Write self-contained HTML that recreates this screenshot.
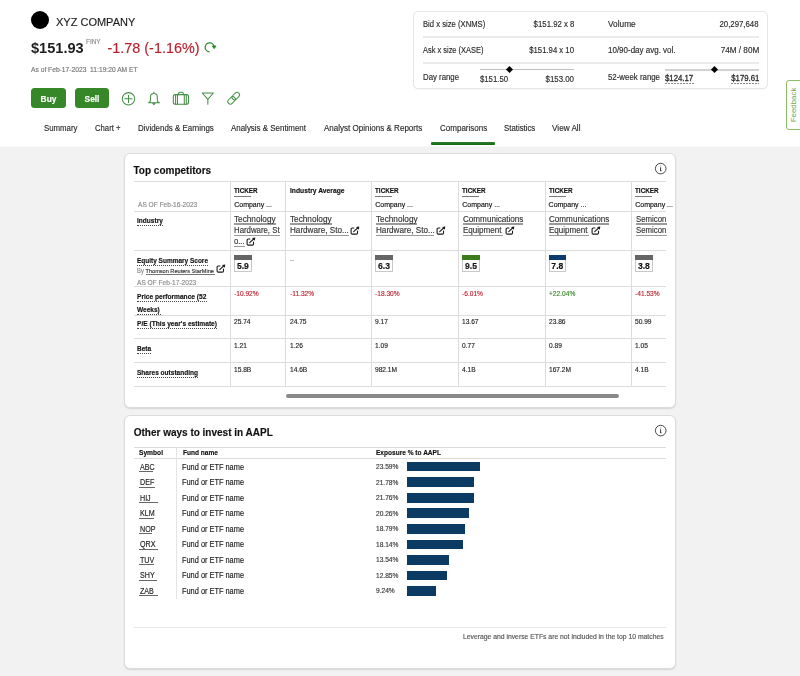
<!DOCTYPE html>
<html><head><meta charset="utf-8"><title>XYZ Company - Comparisons</title>
<style>
html,body{margin:0;padding:0;overflow:hidden;}
body{width:800px;height:676px;position:relative;overflow:hidden;background:#fff;font-family:'Liberation Sans', sans-serif;}
.t{position:absolute;white-space:nowrap;-webkit-text-stroke:0.15px currentColor;}
</style></head><body>
<div style="position:absolute;left:0px;top:146px;width:800px;height:530px;background:#f2f2f2"></div>
<div style="position:absolute;left:0px;top:145.5px;width:800px;height:1.5px;background:linear-gradient(#fff,#f2f2f2)"></div>
<div style="position:absolute;left:31px;top:10.5px;width:18px;height:18px;background:#000;border-radius:50%"></div>
<svg style="position:absolute;left:198px;top:38px" width="24" height="20" viewBox="198 38 24 20"><path d="M209.6 51.9A4.5 4.5 0 1 1 214.1 46.6" fill="none" stroke="#2a8a2a" stroke-width="1.25"/><path d="M212.2 45.9L216.1 45.9L214.2 48.8Z" fill="#1f7f1f" stroke="#1f7f1f" stroke-width="0.6" stroke-linejoin="round"/></svg>
<div style="position:absolute;left:31px;top:88px;width:35px;height:20px;background:#368727;border-radius:3.5px"></div>
<div style="position:absolute;left:75px;top:88px;width:34px;height:20px;background:#368727;border-radius:3.5px"></div>
<svg style="position:absolute;left:118px;top:88px" width="126" height="20" viewBox="118 88 126 20">
<g fill="none" stroke="#468f46" stroke-width="1.05" stroke-linecap="round" stroke-linejoin="round">
<circle cx="128.5" cy="98.8" r="6.2"/><path d="M128.5 95.2v7.2M124.9 98.8h7.2"/>
<path d="M148.3 102.7h11.3M149.2 102.7c0.9-0.8 1.3-1.6 1.3-3.2v-2.6a3.4 3.4 0 0 1 6.8 0v2.6c0 1.6 0.4 2.4 1.3 3.2M153.9 92v1.4M152.6 103.2l1.3 1.5l1.3-1.5"/>
<rect x="173.3" y="94.6" width="15.2" height="9.6" rx="2"/><path d="M178.6 94.6v-1.4a1 1 0 0 1 1-1h2.6a1 1 0 0 1 1 1v1.4M175.6 94.6v9.6M177.5 94.6v9.6M184.3 94.6v9.6M186.3 94.6v9.6"/>
<path d="M202.3 93h11.1l-5.55 6.3z M207.85 99.3v5"/>
<g transform="translate(233.7 98.2) scale(0.9) translate(-233.6 -98.5) rotate(-45 233.6 98.5)"><rect x="225.6" y="95.7" width="9.4" height="5.6" rx="2.8"/><rect x="232.2" y="95.7" width="9.4" height="5.6" rx="2.8"/></g>
</g></svg>
<div style="position:absolute;left:431.3px;top:142px;width:63.6px;height:3.2px;background:linear-gradient(#2f7d2f,#146914);border-radius:1px"></div>
<div style="position:absolute;left:413.25px;top:10.5px;width:355px;height:78.5px;box-sizing:border-box;border:1.3px solid #e6e6e6;border-radius:5px;background:#fff;box-shadow:0 1px 1px rgba(0,0,0,0.03)"></div>
<div style="position:absolute;left:422.5px;top:36.2px;width:336.5px;height:1.4px;background:#ebebeb"></div>
<div style="position:absolute;left:422.5px;top:62.3px;width:336.5px;height:1.4px;background:#ebebeb"></div>
<div style="position:absolute;left:479.5px;top:69px;width:94.5px;height:1.2px;background:#c2c2c2"></div>
<div style="position:absolute;left:665px;top:68.7px;width:94px;height:2px;background:#d2d2d2"></div>
<div style="position:absolute;left:507.1px;top:67.1px;width:5px;height:5px;background:#000;transform:rotate(45deg)"></div>
<div style="position:absolute;left:712.0px;top:67.1px;width:5px;height:5px;background:#000;transform:rotate(45deg)"></div>
<div style="position:absolute;left:665px;top:83px;width:28.5px;height:1px;background:repeating-linear-gradient(90deg,#8a8a8a 0 2px,transparent 2px 3px)"></div>
<div style="position:absolute;left:730.5px;top:83px;width:28.5px;height:1px;background:repeating-linear-gradient(90deg,#8a8a8a 0 2px,transparent 2px 3px)"></div>
<div style="position:absolute;left:786px;top:80px;width:20px;height:50px;box-sizing:border-box;border:1px solid #8cbd6c;border-radius:3px;background:#fff"></div>
<div style="position:absolute;left:794px;top:105px;width:0;height:0"><div style="position:absolute;left:0;top:0;transform:translate(-50%,-50%) rotate(-90deg);font-size:7.9px;color:#6fa84a;white-space:nowrap;line-height:8px">Feedback</div></div>
<div style="position:absolute;left:123.8px;top:153px;width:551.8px;height:255px;box-sizing:border-box;border:1px solid #dcdcdc;border-radius:6px;background:#fff;box-shadow:0 1px 1.5px rgba(0,0,0,0.12)"></div>
<svg style="position:absolute;left:654px;top:162px" width="14" height="14" viewBox="0 0 14 14"><circle cx="6.7" cy="6.6" r="5.3" fill="none" stroke="#333" stroke-width="0.9"/><path d="M6.7 3.7v0.6M6.6 5.3v3.3M6.0 8.7h1.5" stroke="#333" stroke-width="1" fill="none"/></svg>
<div style="position:absolute;left:133.5px;top:180.8px;width:532.5px;height:1px;background:#dcdcdc"></div>
<div style="position:absolute;left:133.5px;top:211.0px;width:532.5px;height:1px;background:#dcdcdc"></div>
<div style="position:absolute;left:133.5px;top:250.0px;width:532.5px;height:1px;background:#dcdcdc"></div>
<div style="position:absolute;left:133.5px;top:286.3px;width:532.5px;height:1px;background:#dcdcdc"></div>
<div style="position:absolute;left:133.5px;top:314.5px;width:532.5px;height:1px;background:#dcdcdc"></div>
<div style="position:absolute;left:133.5px;top:338.1px;width:532.5px;height:1px;background:#dcdcdc"></div>
<div style="position:absolute;left:133.5px;top:362.1px;width:532.5px;height:1px;background:#dcdcdc"></div>
<div style="position:absolute;left:133.5px;top:385.9px;width:532.5px;height:1px;background:#dcdcdc"></div>
<div style="position:absolute;left:230.0px;top:181.3px;width:1px;height:205.09999999999997px;background:#dcdcdc"></div>
<div style="position:absolute;left:284.5px;top:181.3px;width:1px;height:205.09999999999997px;background:#dcdcdc"></div>
<div style="position:absolute;left:371.25px;top:181.3px;width:1px;height:205.09999999999997px;background:#dcdcdc"></div>
<div style="position:absolute;left:458.25px;top:181.3px;width:1px;height:205.09999999999997px;background:#dcdcdc"></div>
<div style="position:absolute;left:544.5px;top:181.3px;width:1px;height:205.09999999999997px;background:#dcdcdc"></div>
<div style="position:absolute;left:631.1px;top:181.3px;width:1px;height:205.09999999999997px;background:#dcdcdc"></div>
<div style="position:absolute;left:234.2px;top:195.6px;width:17px;height:1px;background:#7a7a7a"></div>
<div style="position:absolute;left:375.2px;top:195.6px;width:17px;height:1px;background:#7a7a7a"></div>
<div style="position:absolute;left:462.3px;top:195.6px;width:17px;height:1px;background:#7a7a7a"></div>
<div style="position:absolute;left:548.6px;top:195.6px;width:17px;height:1px;background:#7a7a7a"></div>
<div style="position:absolute;left:635.2px;top:195.6px;width:17px;height:1px;background:#7a7a7a"></div>
<div style="position:absolute;left:137px;top:225px;width:26px;height:0px;border-top:1px dotted #4a4a4a"></div>
<div style="position:absolute;left:234.4px;top:223.4px;width:41.6px;height:1.5px;background:#9a9a9a"></div>
<div style="position:absolute;left:234.4px;top:234.70000000000002px;width:45.6px;height:1.5px;background:#9a9a9a"></div>
<div style="position:absolute;left:234.4px;top:245.8px;width:10.5px;height:1.5px;background:#9a9a9a"></div>
<svg style="position:absolute;left:246.40px;top:236.50px" width="11" height="11" viewBox="0 0 11 11"><path d="M3.9 2.0H2.2a1.1 1.1 0 0 0-1.1 1.1V7.0a1.1 1.1 0 0 0 1.1 1.1H6.4a1.1 1.1 0 0 0 1.1-1.1V5.0M3.7 5.6L8.2 1.5" fill="none" stroke="#1a1a1a" stroke-width="1.1" stroke-linecap="round"/><path d="M9.3 0.5L6.0 1.0L8.8 3.8Z" fill="#1a1a1a"/></svg>
<div style="position:absolute;left:290px;top:223.4px;width:41.6px;height:1.5px;background:#9a9a9a"></div>
<div style="position:absolute;left:290px;top:234.70000000000002px;width:58.75px;height:1.5px;background:#9a9a9a"></div>
<svg style="position:absolute;left:350.20px;top:225.90px" width="11" height="11" viewBox="0 0 11 11"><path d="M3.9 2.0H2.2a1.1 1.1 0 0 0-1.1 1.1V7.0a1.1 1.1 0 0 0 1.1 1.1H6.4a1.1 1.1 0 0 0 1.1-1.1V5.0M3.7 5.6L8.2 1.5" fill="none" stroke="#1a1a1a" stroke-width="1.1" stroke-linecap="round"/><path d="M9.3 0.5L6.0 1.0L8.8 3.8Z" fill="#1a1a1a"/></svg>
<div style="position:absolute;left:375.5px;top:223.4px;width:41.6px;height:1.5px;background:#9a9a9a"></div>
<div style="position:absolute;left:375.5px;top:234.70000000000002px;width:58.75px;height:1.5px;background:#9a9a9a"></div>
<svg style="position:absolute;left:435.70px;top:225.90px" width="11" height="11" viewBox="0 0 11 11"><path d="M3.9 2.0H2.2a1.1 1.1 0 0 0-1.1 1.1V7.0a1.1 1.1 0 0 0 1.1 1.1H6.4a1.1 1.1 0 0 0 1.1-1.1V5.0M3.7 5.6L8.2 1.5" fill="none" stroke="#1a1a1a" stroke-width="1.1" stroke-linecap="round"/><path d="M9.3 0.5L6.0 1.0L8.8 3.8Z" fill="#1a1a1a"/></svg>
<div style="position:absolute;left:462.5px;top:223.4px;width:60.4px;height:1.5px;background:#9a9a9a"></div>
<div style="position:absolute;left:462.5px;top:234.70000000000002px;width:40px;height:1.5px;background:#9a9a9a"></div>
<svg style="position:absolute;left:504.50px;top:225.90px" width="11" height="11" viewBox="0 0 11 11"><path d="M3.9 2.0H2.2a1.1 1.1 0 0 0-1.1 1.1V7.0a1.1 1.1 0 0 0 1.1 1.1H6.4a1.1 1.1 0 0 0 1.1-1.1V5.0M3.7 5.6L8.2 1.5" fill="none" stroke="#1a1a1a" stroke-width="1.1" stroke-linecap="round"/><path d="M9.3 0.5L6.0 1.0L8.8 3.8Z" fill="#1a1a1a"/></svg>
<div style="position:absolute;left:549px;top:223.4px;width:60.4px;height:1.5px;background:#9a9a9a"></div>
<div style="position:absolute;left:549px;top:234.70000000000002px;width:40px;height:1.5px;background:#9a9a9a"></div>
<svg style="position:absolute;left:590.90px;top:225.90px" width="11" height="11" viewBox="0 0 11 11"><path d="M3.9 2.0H2.2a1.1 1.1 0 0 0-1.1 1.1V7.0a1.1 1.1 0 0 0 1.1 1.1H6.4a1.1 1.1 0 0 0 1.1-1.1V5.0M3.7 5.6L8.2 1.5" fill="none" stroke="#1a1a1a" stroke-width="1.1" stroke-linecap="round"/><path d="M9.3 0.5L6.0 1.0L8.8 3.8Z" fill="#1a1a1a"/></svg>
<div style="position:absolute;left:635.5px;top:223.4px;width:31px;height:1.5px;background:#9a9a9a"></div>
<div style="position:absolute;left:635.5px;top:234.70000000000002px;width:31px;height:1.5px;background:#9a9a9a"></div>
<div style="position:absolute;left:137px;top:264.6px;width:71px;height:0px;border-top:1px dotted #4a4a4a"></div>
<div style="position:absolute;left:145.5px;top:274px;width:69.5px;height:0.9px;background:#777"></div>
<svg style="position:absolute;left:216.20px;top:264.20px" width="11" height="11" viewBox="0 0 11 11"><path d="M3.9 2.0H2.2a1.1 1.1 0 0 0-1.1 1.1V7.0a1.1 1.1 0 0 0 1.1 1.1H6.4a1.1 1.1 0 0 0 1.1-1.1V5.0M3.7 5.6L8.2 1.5" fill="none" stroke="#1a1a1a" stroke-width="1.1" stroke-linecap="round"/><path d="M9.3 0.5L6.0 1.0L8.8 3.8Z" fill="#1a1a1a"/></svg>
<div style="position:absolute;left:234.2px;top:255.2px;width:17.5px;height:17.2px;box-sizing:border-box;border:1px solid #c8c8c8;background:#fff"></div>
<div style="position:absolute;left:234.2px;top:255.2px;width:17.5px;height:4.8px;background:#666"></div>
<div style="position:absolute;left:375.3px;top:255.2px;width:17.5px;height:17.2px;box-sizing:border-box;border:1px solid #c8c8c8;background:#fff"></div>
<div style="position:absolute;left:375.3px;top:255.2px;width:17.5px;height:4.8px;background:#666"></div>
<div style="position:absolute;left:462.3px;top:255.2px;width:17.5px;height:17.2px;box-sizing:border-box;border:1px solid #c8c8c8;background:#fff"></div>
<div style="position:absolute;left:462.3px;top:255.2px;width:17.5px;height:4.8px;background:#3a7d1a"></div>
<div style="position:absolute;left:548.6px;top:255.2px;width:17.5px;height:17.2px;box-sizing:border-box;border:1px solid #c8c8c8;background:#fff"></div>
<div style="position:absolute;left:548.6px;top:255.2px;width:17.5px;height:4.8px;background:#0b3c6e"></div>
<div style="position:absolute;left:635.2px;top:255.2px;width:17.5px;height:17.2px;box-sizing:border-box;border:1px solid #c8c8c8;background:#fff"></div>
<div style="position:absolute;left:635.2px;top:255.2px;width:17.5px;height:4.8px;background:#666"></div>
<div style="position:absolute;left:137px;top:301px;width:69.5px;height:0px;border-top:1px dotted #4a4a4a"></div>
<div style="position:absolute;left:137px;top:314px;width:24px;height:0px;border-top:1px dotted #4a4a4a"></div>
<div style="position:absolute;left:137px;top:328.4px;width:80px;height:0px;border-top:1px dotted #4a4a4a"></div>
<div style="position:absolute;left:137px;top:353px;width:14px;height:0px;border-top:1px dotted #4a4a4a"></div>
<div style="position:absolute;left:137px;top:377px;width:61px;height:0px;border-top:1px dotted #4a4a4a"></div>
<div style="position:absolute;left:286.3px;top:393.7px;width:333px;height:3.9px;background:#8a8a8a;border-radius:2px"></div>
<div style="position:absolute;left:123.8px;top:415.1px;width:551.8px;height:254.2px;box-sizing:border-box;border:1px solid #dcdcdc;border-radius:6px;background:#fff;box-shadow:0 1px 1.5px rgba(0,0,0,0.12)"></div>
<svg style="position:absolute;left:654px;top:423.5px" width="14" height="14" viewBox="0 0 14 14"><circle cx="6.7" cy="6.6" r="5.3" fill="none" stroke="#333" stroke-width="0.9"/><path d="M6.7 3.7v0.6M6.6 5.3v3.3M6.0 8.7h1.5" stroke="#333" stroke-width="1" fill="none"/></svg>
<div style="position:absolute;left:133.5px;top:446.8px;width:532.5px;height:1px;background:#dcdcdc"></div>
<div style="position:absolute;left:133.5px;top:457.9px;width:532.5px;height:1px;background:#dcdcdc"></div>
<div style="position:absolute;left:176px;top:447px;width:1px;height:151.5px;background:#e4e4e4"></div>
<div style="position:absolute;left:139px;top:471.1px;width:14.2px;height:0.9px;background:#666"></div>
<div style="position:absolute;left:407.3px;top:461.90000000000003px;width:72.30335px;height:9.6px;background:#0b3a63"></div>
<div style="position:absolute;left:139px;top:486.62px;width:15.7px;height:0.9px;background:#666"></div>
<div style="position:absolute;left:407.3px;top:477.42px;width:66.7557px;height:9.6px;background:#0b3a63"></div>
<div style="position:absolute;left:139px;top:502.14000000000004px;width:18.7px;height:0.9px;background:#666"></div>
<div style="position:absolute;left:407.3px;top:492.94000000000005px;width:66.6944px;height:9.6px;background:#0b3a63"></div>
<div style="position:absolute;left:139px;top:517.6600000000001px;width:14.9px;height:0.9px;background:#666"></div>
<div style="position:absolute;left:407.3px;top:508.4600000000001px;width:62.096900000000005px;height:9.6px;background:#0b3a63"></div>
<div style="position:absolute;left:139px;top:533.1800000000001px;width:13.3px;height:0.9px;background:#666"></div>
<div style="position:absolute;left:407.3px;top:523.98px;width:57.59135px;height:9.6px;background:#0b3a63"></div>
<div style="position:absolute;left:139px;top:548.7px;width:19.2px;height:0.9px;background:#666"></div>
<div style="position:absolute;left:407.3px;top:539.5px;width:55.5991px;height:9.6px;background:#0b3a63"></div>
<div style="position:absolute;left:139px;top:564.22px;width:15px;height:0.9px;background:#666"></div>
<div style="position:absolute;left:407.3px;top:555.02px;width:41.500099999999996px;height:9.6px;background:#0b3a63"></div>
<div style="position:absolute;left:139px;top:579.74px;width:18px;height:0.9px;background:#666"></div>
<div style="position:absolute;left:407.3px;top:570.54px;width:39.38525px;height:9.6px;background:#0b3a63"></div>
<div style="position:absolute;left:139px;top:595.26px;width:18.7px;height:0.9px;background:#666"></div>
<div style="position:absolute;left:407.3px;top:586.06px;width:28.3206px;height:9.6px;background:#0b3a63"></div>
<div style="position:absolute;left:133.5px;top:627px;width:532.5px;height:1px;#e6e6e6;background:#e6e6e6"></div>
<div style="position:absolute;left:0;top:0;width:800px;height:676px;will-change:transform">
<div class="t" style="left:56px;top:14px;font-size:11px;line-height:17px;font-weight:400;color:#1f1f1f;">XYZ COMPANY</div>
<div class="t" style="left:31px;top:37px;font-size:14.2px;line-height:22px;font-weight:700;color:#1f1f1f;-webkit-text-stroke:0px;transform:scaleX(1.0283);transform-origin:0 0">$151.93</div>
<div class="t" style="left:86px;top:37px;font-size:6.4px;line-height:10px;font-weight:400;color:#8a8a8a;">FINY</div>
<div class="t" style="left:107.5px;top:37px;font-size:14.4px;line-height:22px;font-weight:400;color:#bb1f2c;">-1.78 (-1.16%)</div>
<div class="t" style="left:31px;top:64px;font-size:6.7px;line-height:11px;font-weight:400;color:#777;">As of Feb-17-2023&nbsp;&nbsp;11:19:20 AM ET</div>
<div class="t" style="left:-51.5px;width:200px;text-align:center;top:93px;font-size:8.4px;line-height:13px;font-weight:700;color:#fff;">Buy</div>
<div class="t" style="left:-8px;width:200px;text-align:center;top:93px;font-size:8.4px;line-height:13px;font-weight:700;color:#fff;">Sell</div>
<div class="t" style="left:43.75px;top:121px;font-size:8.7px;line-height:14px;font-weight:400;color:#2a2a2a;;transform:scaleX(0.9012);transform-origin:0 0">Summary</div>
<div class="t" style="left:94.75px;top:121px;font-size:8.7px;line-height:14px;font-weight:400;color:#2a2a2a;;transform:scaleX(0.8874);transform-origin:0 0">Chart +</div>
<div class="t" style="left:138px;top:121px;font-size:8.7px;line-height:14px;font-weight:400;color:#2a2a2a;;transform:scaleX(0.9120);transform-origin:0 0">Dividends &amp; Earnings</div>
<div class="t" style="left:231.25px;top:121px;font-size:8.7px;line-height:14px;font-weight:400;color:#2a2a2a;;transform:scaleX(0.9136);transform-origin:0 0">Analysis &amp; Sentiment</div>
<div class="t" style="left:323.75px;top:121px;font-size:8.7px;line-height:14px;font-weight:400;color:#2a2a2a;;transform:scaleX(0.9248);transform-origin:0 0">Analyst Opinions &amp; Reports</div>
<div class="t" style="left:439.5px;top:121px;font-size:8.7px;line-height:14px;font-weight:400;color:#2a2a2a;;transform:scaleX(0.9231);transform-origin:0 0">Comparisons</div>
<div class="t" style="left:503.75px;top:121px;font-size:8.7px;line-height:14px;font-weight:400;color:#2a2a2a;;transform:scaleX(0.8989);transform-origin:0 0">Statistics</div>
<div class="t" style="left:552px;top:121px;font-size:8.7px;line-height:14px;font-weight:400;color:#2a2a2a;;transform:scaleX(0.9417);transform-origin:0 0">View All</div>
<div class="t" style="left:422.75px;top:18px;font-size:8.3px;line-height:13px;font-weight:400;color:#2b2b2b;;transform:scaleX(0.9248);transform-origin:0 0">Bid x size (XNMS)</div>
<div class="t" style="right:226px;top:18px;font-size:8.3px;line-height:13px;font-weight:400;color:#2b2b2b;;transform:scaleX(0.9395);transform-origin:100% 0">$151.92 x 8</div>
<div class="t" style="left:607.5px;top:18px;font-size:8.3px;line-height:13px;font-weight:400;color:#2b2b2b;;transform:scaleX(1.0023);transform-origin:0 0">Volume</div>
<div class="t" style="right:41px;top:18px;font-size:8.3px;line-height:13px;font-weight:400;color:#2b2b2b;;transform:scaleX(0.9391);transform-origin:100% 0">20,297,648</div>
<div class="t" style="left:422.75px;top:44px;font-size:8.3px;line-height:13px;font-weight:400;color:#2b2b2b;;transform:scaleX(0.8973);transform-origin:0 0">Ask x size (XASE)</div>
<div class="t" style="right:226px;top:44px;font-size:8.3px;line-height:13px;font-weight:400;color:#2b2b2b;;transform:scaleX(0.9326);transform-origin:100% 0">$151.94 x 10</div>
<div class="t" style="left:607.5px;top:44px;font-size:8.3px;line-height:13px;font-weight:400;color:#2b2b2b;;transform:scaleX(0.9628);transform-origin:0 0">10/90-day avg. vol.</div>
<div class="t" style="right:41px;top:44px;font-size:8.3px;line-height:13px;font-weight:400;color:#2b2b2b;;transform:scaleX(0.9821);transform-origin:100% 0">74M / 80M</div>
<div class="t" style="left:422.75px;top:71px;font-size:8.3px;line-height:13px;font-weight:400;color:#2b2b2b;;transform:scaleX(0.9404);transform-origin:0 0">Day range</div>
<div class="t" style="left:607.5px;top:71px;font-size:8.3px;line-height:13px;font-weight:400;color:#2b2b2b;;transform:scaleX(0.9473);transform-origin:0 0">52-week range</div>
<div class="t" style="left:480px;top:73px;font-size:8.3px;line-height:13px;font-weight:400;color:#2b2b2b;;transform:scaleX(0.9333);transform-origin:0 0">$151.50</div>
<div class="t" style="right:226px;top:73px;font-size:8.3px;line-height:13px;font-weight:400;color:#2b2b2b;;transform:scaleX(0.9500);transform-origin:100% 0">$153.00</div>
<div class="t" style="left:665px;top:72px;font-size:8.4px;line-height:13px;font-weight:400;color:#2b2b2b;-webkit-text-stroke:0.3px #2b2b2b;transform:scaleX(0.9313);transform-origin:0 0">$124.17</div>
<div class="t" style="right:41px;top:72px;font-size:8.4px;line-height:13px;font-weight:400;color:#2b2b2b;-webkit-text-stroke:0.3px #2b2b2b;transform:scaleX(0.9247);transform-origin:100% 0">$179.61</div>
<div class="t" style="left:133.5px;top:163px;font-size:10px;line-height:15px;font-weight:700;color:#111;">Top competitors</div>
<div class="t" style="left:137.8px;top:199px;font-size:7px;line-height:11px;font-weight:400;color:#8a8a8a;;transform:scaleX(0.9392);transform-origin:0 0">AS OF Feb-16-2023</div>
<div class="t" style="left:234.2px;top:185px;font-size:7.2px;line-height:11px;font-weight:700;color:#111;;transform:scaleX(0.8817);transform-origin:0 0">TICKER</div>
<div class="t" style="left:234.2px;top:199px;font-size:7px;line-height:11px;font-weight:400;color:#111;">Company ...</div>
<div class="t" style="left:289.6px;top:185px;font-size:7px;line-height:11px;font-weight:700;color:#111;;transform:scaleX(0.9617);transform-origin:0 0">Industry Average</div>
<div class="t" style="left:375.2px;top:185px;font-size:7.2px;line-height:11px;font-weight:700;color:#111;;transform:scaleX(0.8817);transform-origin:0 0">TICKER</div>
<div class="t" style="left:375.2px;top:199px;font-size:7px;line-height:11px;font-weight:400;color:#111;">Company ...</div>
<div class="t" style="left:462.3px;top:185px;font-size:7.2px;line-height:11px;font-weight:700;color:#111;;transform:scaleX(0.8817);transform-origin:0 0">TICKER</div>
<div class="t" style="left:462.3px;top:199px;font-size:7px;line-height:11px;font-weight:400;color:#111;">Company ...</div>
<div class="t" style="left:548.6px;top:185px;font-size:7.2px;line-height:11px;font-weight:700;color:#111;;transform:scaleX(0.8817);transform-origin:0 0">TICKER</div>
<div class="t" style="left:548.6px;top:199px;font-size:7px;line-height:11px;font-weight:400;color:#111;">Company ...</div>
<div class="t" style="left:635.2px;top:185px;font-size:7.2px;line-height:11px;font-weight:700;color:#111;;transform:scaleX(0.8817);transform-origin:0 0">TICKER</div>
<div class="t" style="left:635.2px;top:199px;font-size:7px;line-height:11px;font-weight:400;color:#111;">Company ...</div>
<div class="t" style="left:137px;top:215px;font-size:7px;line-height:11px;font-weight:700;color:#111;transform:scaleX(0.935);transform-origin:0 0">Industry</div>
<div class="t" style="left:234.4px;top:213px;font-size:8.4px;line-height:13px;font-weight:400;color:#333;;transform:scaleX(0.9817);transform-origin:0 0">Technology</div>
<div class="t" style="left:234.4px;top:224px;font-size:8.4px;line-height:13px;font-weight:400;color:#333;;transform:scaleX(0.9330);transform-origin:0 0">Hardware, St</div>
<div class="t" style="left:234.4px;top:235px;font-size:8.4px;line-height:13px;font-weight:400;color:#333;;transform:scaleX(0.9106);transform-origin:0 0">o...</div>
<div class="t" style="left:290px;top:213px;font-size:8.4px;line-height:13px;font-weight:400;color:#333;;transform:scaleX(0.9817);transform-origin:0 0">Technology</div>
<div class="t" style="left:290px;top:224px;font-size:8.4px;line-height:13px;font-weight:400;color:#333;;transform:scaleX(0.9708);transform-origin:0 0">Hardware, Sto...</div>
<div class="t" style="left:375.5px;top:213px;font-size:8.4px;line-height:13px;font-weight:400;color:#333;;transform:scaleX(0.9817);transform-origin:0 0">Technology</div>
<div class="t" style="left:375.5px;top:224px;font-size:8.4px;line-height:13px;font-weight:400;color:#333;;transform:scaleX(0.9708);transform-origin:0 0">Hardware, Sto...</div>
<div class="t" style="left:462.5px;top:213px;font-size:8.4px;line-height:13px;font-weight:400;color:#333;;transform:scaleX(0.9683);transform-origin:0 0">Communications</div>
<div class="t" style="left:462.5px;top:224px;font-size:8.4px;line-height:13px;font-weight:400;color:#333;;transform:scaleX(0.9614);transform-origin:0 0">Equipment</div>
<div class="t" style="left:549px;top:213px;font-size:8.4px;line-height:13px;font-weight:400;color:#333;;transform:scaleX(0.9683);transform-origin:0 0">Communications</div>
<div class="t" style="left:549px;top:224px;font-size:8.4px;line-height:13px;font-weight:400;color:#333;;transform:scaleX(0.9614);transform-origin:0 0">Equipment</div>
<div class="t" style="left:635.5px;top:213px;font-size:8.4px;line-height:13px;font-weight:400;color:#333;;transform:scaleX(0.9296);transform-origin:0 0">Semicon</div>
<div class="t" style="left:635.5px;top:224px;font-size:8.4px;line-height:13px;font-weight:400;color:#333;;transform:scaleX(0.9296);transform-origin:0 0">Semicon</div>
<div class="t" style="left:137px;top:255px;font-size:7px;line-height:11px;font-weight:700;color:#111;;transform:scaleX(0.9264);transform-origin:0 0">Equity Summary Score</div>
<div class="t" style="left:137px;top:266px;font-size:6.4px;line-height:10px;font-weight:400;color:#888;;transform:scaleX(0.9105);transform-origin:0 0">By</div>
<div class="t" style="left:145.5px;top:267px;font-size:5.6px;line-height:9px;font-weight:400;color:#333;">Thomson Reuters StarMine</div>
<div class="t" style="left:137.2px;top:277px;font-size:7px;line-height:11px;font-weight:400;color:#8a8a8a;;transform:scaleX(0.9392);transform-origin:0 0">AS OF Feb-17-2023</div>
<div class="t" style="left:142.95px;width:200px;text-align:center;top:260px;font-size:8.6px;line-height:13px;font-weight:700;color:#111;">5.9</div>
<div class="t" style="left:290px;top:256px;font-size:5.5px;line-height:9px;font-weight:400;color:#666;letter-spacing:0.2px">--</div>
<div class="t" style="left:284.05px;width:200px;text-align:center;top:260px;font-size:8.6px;line-height:13px;font-weight:700;color:#111;">6.3</div>
<div class="t" style="left:371.05px;width:200px;text-align:center;top:260px;font-size:8.6px;line-height:13px;font-weight:700;color:#111;">9.5</div>
<div class="t" style="left:457.35px;width:200px;text-align:center;top:260px;font-size:8.6px;line-height:13px;font-weight:700;color:#111;">7.8</div>
<div class="t" style="left:543.95px;width:200px;text-align:center;top:260px;font-size:8.6px;line-height:13px;font-weight:700;color:#111;">3.8</div>
<div class="t" style="left:137px;top:291px;font-size:7px;line-height:11px;font-weight:700;color:#111;;transform:scaleX(0.9436);transform-origin:0 0">Price performance (52</div>
<div class="t" style="left:137px;top:304px;font-size:7px;line-height:11px;font-weight:700;color:#111;transform:scaleX(0.935);transform-origin:0 0">Weeks)</div>
<div class="t" style="left:234.2px;top:288px;font-size:7.2px;line-height:11px;font-weight:400;color:#bb1f2c;transform:scaleX(0.92);transform-origin:0 0">-10.92%</div>
<div class="t" style="left:289.6px;top:288px;font-size:7.2px;line-height:11px;font-weight:400;color:#bb1f2c;transform:scaleX(0.92);transform-origin:0 0">-11.32%</div>
<div class="t" style="left:375.2px;top:288px;font-size:7.2px;line-height:11px;font-weight:400;color:#bb1f2c;transform:scaleX(0.92);transform-origin:0 0">-18.30%</div>
<div class="t" style="left:462.3px;top:288px;font-size:7.2px;line-height:11px;font-weight:400;color:#bb1f2c;transform:scaleX(0.92);transform-origin:0 0">-6.01%</div>
<div class="t" style="left:548.6px;top:288px;font-size:7.2px;line-height:11px;font-weight:400;color:#368727;transform:scaleX(0.92);transform-origin:0 0">+22.04%</div>
<div class="t" style="left:635.2px;top:288px;font-size:7.2px;line-height:11px;font-weight:400;color:#bb1f2c;transform:scaleX(0.92);transform-origin:0 0">-41.53%</div>
<div class="t" style="left:137px;top:318px;font-size:7px;line-height:11px;font-weight:700;color:#111;;transform:scaleX(0.9462);transform-origin:0 0">P/E (This year's estimate)</div>
<div class="t" style="left:137px;top:343px;font-size:7px;line-height:11px;font-weight:700;color:#111;transform:scaleX(0.935);transform-origin:0 0">Beta</div>
<div class="t" style="left:137px;top:367px;font-size:7px;line-height:11px;font-weight:700;color:#111;;transform:scaleX(0.9335);transform-origin:0 0">Shares outstanding</div>
<div class="t" style="left:234.2px;top:316px;font-size:7.2px;line-height:11px;font-weight:400;color:#222;transform:scaleX(0.92);transform-origin:0 0">25.74</div>
<div class="t" style="left:234.2px;top:340px;font-size:7.2px;line-height:11px;font-weight:400;color:#222;transform:scaleX(0.92);transform-origin:0 0">1.21</div>
<div class="t" style="left:234.2px;top:364px;font-size:7.2px;line-height:11px;font-weight:400;color:#222;transform:scaleX(0.92);transform-origin:0 0">15.8B</div>
<div class="t" style="left:289.6px;top:316px;font-size:7.2px;line-height:11px;font-weight:400;color:#222;transform:scaleX(0.92);transform-origin:0 0">24.75</div>
<div class="t" style="left:289.6px;top:340px;font-size:7.2px;line-height:11px;font-weight:400;color:#222;transform:scaleX(0.92);transform-origin:0 0">1.26</div>
<div class="t" style="left:289.6px;top:364px;font-size:7.2px;line-height:11px;font-weight:400;color:#222;transform:scaleX(0.92);transform-origin:0 0">14.6B</div>
<div class="t" style="left:375.2px;top:316px;font-size:7.2px;line-height:11px;font-weight:400;color:#222;transform:scaleX(0.92);transform-origin:0 0">9.17</div>
<div class="t" style="left:375.2px;top:340px;font-size:7.2px;line-height:11px;font-weight:400;color:#222;transform:scaleX(0.92);transform-origin:0 0">1.09</div>
<div class="t" style="left:375.2px;top:364px;font-size:7.2px;line-height:11px;font-weight:400;color:#222;transform:scaleX(0.92);transform-origin:0 0">982.1M</div>
<div class="t" style="left:462.3px;top:316px;font-size:7.2px;line-height:11px;font-weight:400;color:#222;transform:scaleX(0.92);transform-origin:0 0">13.67</div>
<div class="t" style="left:462.3px;top:340px;font-size:7.2px;line-height:11px;font-weight:400;color:#222;transform:scaleX(0.92);transform-origin:0 0">0.77</div>
<div class="t" style="left:462.3px;top:364px;font-size:7.2px;line-height:11px;font-weight:400;color:#222;transform:scaleX(0.92);transform-origin:0 0">4.1B</div>
<div class="t" style="left:548.6px;top:316px;font-size:7.2px;line-height:11px;font-weight:400;color:#222;transform:scaleX(0.92);transform-origin:0 0">23.86</div>
<div class="t" style="left:548.6px;top:340px;font-size:7.2px;line-height:11px;font-weight:400;color:#222;transform:scaleX(0.92);transform-origin:0 0">0.89</div>
<div class="t" style="left:548.6px;top:364px;font-size:7.2px;line-height:11px;font-weight:400;color:#222;transform:scaleX(0.92);transform-origin:0 0">167.2M</div>
<div class="t" style="left:635.2px;top:316px;font-size:7.2px;line-height:11px;font-weight:400;color:#222;transform:scaleX(0.92);transform-origin:0 0">50.99</div>
<div class="t" style="left:635.2px;top:340px;font-size:7.2px;line-height:11px;font-weight:400;color:#222;transform:scaleX(0.92);transform-origin:0 0">1.05</div>
<div class="t" style="left:635.2px;top:364px;font-size:7.2px;line-height:11px;font-weight:400;color:#222;transform:scaleX(0.92);transform-origin:0 0">4.1B</div>
<div class="t" style="left:133.7px;top:425px;font-size:10px;line-height:15px;font-weight:700;color:#111;">Other ways to invest in AAPL</div>
<div class="t" style="left:139px;top:447px;font-size:7px;line-height:11px;font-weight:700;color:#111;;transform:scaleX(0.9487);transform-origin:0 0">Symbol</div>
<div class="t" style="left:182.8px;top:447px;font-size:7px;line-height:11px;font-weight:700;color:#111;transform:scaleX(0.935);transform-origin:0 0">Fund name</div>
<div class="t" style="left:376px;top:447px;font-size:7px;line-height:11px;font-weight:700;color:#111;;transform:scaleX(0.9369);transform-origin:0 0">Exposure % to AAPL</div>
<div class="t" style="left:139.7px;top:461px;font-size:8.2px;line-height:13px;font-weight:400;color:#222;transform:scaleX(0.87);transform-origin:0 0">ABC</div>
<div class="t" style="left:181.5px;top:461px;font-size:8.2px;line-height:13px;font-weight:400;color:#1a1a1a;;transform:scaleX(0.9022);transform-origin:0 0">Fund or ETF name</div>
<div class="t" style="left:376px;top:461px;font-size:7.2px;line-height:11px;font-weight:400;color:#333;transform:scaleX(0.92);transform-origin:0 0">23.59%</div>
<div class="t" style="left:139.7px;top:476px;font-size:8.2px;line-height:13px;font-weight:400;color:#222;transform:scaleX(0.87);transform-origin:0 0">DEF</div>
<div class="t" style="left:181.5px;top:476px;font-size:8.2px;line-height:13px;font-weight:400;color:#1a1a1a;;transform:scaleX(0.9022);transform-origin:0 0">Fund or ETF name</div>
<div class="t" style="left:376px;top:477px;font-size:7.2px;line-height:11px;font-weight:400;color:#333;transform:scaleX(0.92);transform-origin:0 0">21.78%</div>
<div class="t" style="left:139.7px;top:492px;font-size:8.2px;line-height:13px;font-weight:400;color:#222;transform:scaleX(0.87);transform-origin:0 0">HIJ</div>
<div class="t" style="left:181.5px;top:492px;font-size:8.2px;line-height:13px;font-weight:400;color:#1a1a1a;;transform:scaleX(0.9022);transform-origin:0 0">Fund or ETF name</div>
<div class="t" style="left:376px;top:492px;font-size:7.2px;line-height:11px;font-weight:400;color:#333;transform:scaleX(0.92);transform-origin:0 0">21.76%</div>
<div class="t" style="left:139.7px;top:507px;font-size:8.2px;line-height:13px;font-weight:400;color:#222;transform:scaleX(0.87);transform-origin:0 0">KLM</div>
<div class="t" style="left:181.5px;top:507px;font-size:8.2px;line-height:13px;font-weight:400;color:#1a1a1a;;transform:scaleX(0.9022);transform-origin:0 0">Fund or ETF name</div>
<div class="t" style="left:376px;top:508px;font-size:7.2px;line-height:11px;font-weight:400;color:#333;transform:scaleX(0.92);transform-origin:0 0">20.26%</div>
<div class="t" style="left:139.7px;top:523px;font-size:8.2px;line-height:13px;font-weight:400;color:#222;transform:scaleX(0.87);transform-origin:0 0">NOP</div>
<div class="t" style="left:181.5px;top:523px;font-size:8.2px;line-height:13px;font-weight:400;color:#1a1a1a;;transform:scaleX(0.9022);transform-origin:0 0">Fund or ETF name</div>
<div class="t" style="left:376px;top:523px;font-size:7.2px;line-height:11px;font-weight:400;color:#333;transform:scaleX(0.92);transform-origin:0 0">18.79%</div>
<div class="t" style="left:139.7px;top:538px;font-size:8.2px;line-height:13px;font-weight:400;color:#222;transform:scaleX(0.87);transform-origin:0 0">QRX</div>
<div class="t" style="left:181.5px;top:538px;font-size:8.2px;line-height:13px;font-weight:400;color:#1a1a1a;;transform:scaleX(0.9022);transform-origin:0 0">Fund or ETF name</div>
<div class="t" style="left:376px;top:539px;font-size:7.2px;line-height:11px;font-weight:400;color:#333;transform:scaleX(0.92);transform-origin:0 0">18.14%</div>
<div class="t" style="left:139.7px;top:554px;font-size:8.2px;line-height:13px;font-weight:400;color:#222;transform:scaleX(0.87);transform-origin:0 0">TUV</div>
<div class="t" style="left:181.5px;top:554px;font-size:8.2px;line-height:13px;font-weight:400;color:#1a1a1a;;transform:scaleX(0.9022);transform-origin:0 0">Fund or ETF name</div>
<div class="t" style="left:376px;top:554px;font-size:7.2px;line-height:11px;font-weight:400;color:#333;transform:scaleX(0.92);transform-origin:0 0">13.54%</div>
<div class="t" style="left:139.7px;top:569px;font-size:8.2px;line-height:13px;font-weight:400;color:#222;transform:scaleX(0.87);transform-origin:0 0">SHY</div>
<div class="t" style="left:181.5px;top:569px;font-size:8.2px;line-height:13px;font-weight:400;color:#1a1a1a;;transform:scaleX(0.9022);transform-origin:0 0">Fund or ETF name</div>
<div class="t" style="left:376px;top:570px;font-size:7.2px;line-height:11px;font-weight:400;color:#333;transform:scaleX(0.92);transform-origin:0 0">12.85%</div>
<div class="t" style="left:139.7px;top:585px;font-size:8.2px;line-height:13px;font-weight:400;color:#222;transform:scaleX(0.87);transform-origin:0 0">ZAB</div>
<div class="t" style="left:181.5px;top:585px;font-size:8.2px;line-height:13px;font-weight:400;color:#1a1a1a;;transform:scaleX(0.9022);transform-origin:0 0">Fund or ETF name</div>
<div class="t" style="left:376px;top:585px;font-size:7.2px;line-height:11px;font-weight:400;color:#333;transform:scaleX(0.92);transform-origin:0 0">9.24%</div>
<div class="t" style="right:136.39999999999998px;top:631px;font-size:6.8px;line-height:11px;font-weight:400;color:#555;">Leverage and inverse ETFs are not included in the top 10 matches</div>
</div>
</body></html>
